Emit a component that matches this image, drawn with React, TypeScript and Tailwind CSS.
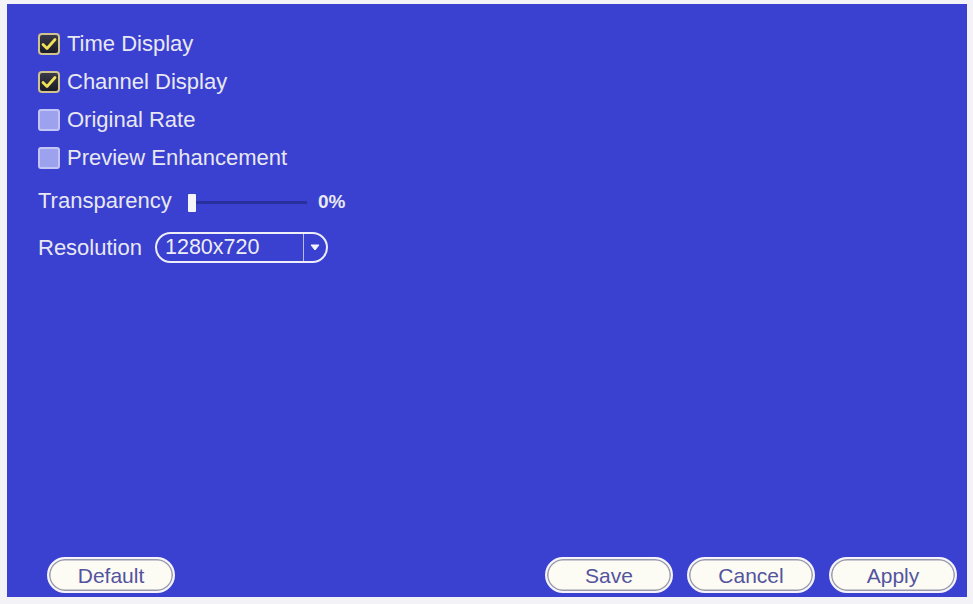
import React from "react";

const font = { fontFamily: '"Liberation Sans", Arial, sans-serif' };

const CheckBox: React.FunctionComponent<{ checked: boolean }> = ({ checked }) =>
  checked ? (
    <div className="w-[22px] h-[22px] rounded-[4px] border-2 border-[#cfc48e] bg-gradient-to-b from-[#3a3a48] to-[#1c1c28] flex items-center justify-center">
      <svg width="16" height="14" viewBox="0 0 16 14">
        <path
          d="M2 7.5 L6 11.5 L14 2.5"
          fill="none"
          stroke="#eee25a"
          strokeWidth="2.8"
          strokeLinecap="round"
          strokeLinejoin="round"
        />
      </svg>
    </div>
  ) : (
    <div className="w-[22px] h-[22px] rounded-[3px] border-2 border-[#c3c6f4] bg-[#9da2ee]" />
  );

const Option: React.FunctionComponent<{ label: string; checked: boolean }> = ({
  label,
  checked,
}) => (
  <div className="h-[38px] flex items-center gap-[7px]">
    <CheckBox checked={checked} />
    <span className="text-[22px] text-[#e8e8f2] leading-none">{label}</span>
  </div>
);

const PillButton: React.FunctionComponent<{ label: string }> = ({ label }) => (
  <button className="w-[128px] h-[36px] rounded-full border-2 border-[#f4f4fa] bg-[#fcfbf4] shadow-[inset_0_0_0_1.5px_#9a9aac] text-[21px] text-[#54549e] leading-none flex items-center justify-center">
    {label}
  </button>
);

export default function App() {
  return (
    <div className="w-[973px] h-[604px] bg-[#f3f3f7] pt-[4px] pl-[7px]" style={font}>
      <div className="w-[960px] h-[593px] bg-[#3a40cf] flex flex-col pl-[31px] pr-[10px] pt-[21px] pb-[4px]">
        <Option label="Time Display" checked />
        <Option label="Channel Display" checked />
        <Option label="Original Rate" checked={false} />
        <Option label="Preview Enhancement" checked={false} />

        <div className="h-[38px] mt-[5px] flex items-center">
          <span className="w-[150px] text-[22px] text-[#e8e8f2] leading-none">Transparency</span>
          <div className="w-[8px] h-[18px] bg-[#f4f4f8] rounded-[1px] mt-[3px]" />
          <div className="w-[111px] h-[3px] bg-[#2a2f9e] mt-[2px]" />
          <span className="ml-[11px] text-[19px] font-bold text-[#e8e8f2] leading-none">0%</span>
        </div>

        <div className="h-[31px] mt-[12px] flex items-center">
          <span className="w-[117px] text-[22px] text-[#e8e8f2] leading-none">Resolution</span>
          <div className="w-[173px] h-[31px] rounded-full border-2 border-[#eeeef8] flex items-center">
            <span className="flex-1 pl-[8px] text-[21.5px] text-[#eeeef6] leading-none">1280x720</span>
            <div className="w-[1px] h-full bg-[#b8bbe8]" />
            <div className="w-[22px] flex items-center justify-center">
              <svg width="10" height="7" viewBox="0 0 10 7">
                <path d="M1 1 L9 1 L5 6 Z" fill="#f4f4fa" stroke="#f4f4fa" strokeLinejoin="round" />
              </svg>
            </div>
          </div>
        </div>

        <div className="mt-auto flex items-center pl-[9px]">
          <PillButton label="Default" />
          <div className="ml-auto flex gap-[14px]">
            <PillButton label="Save" />
            <PillButton label="Cancel" />
            <PillButton label="Apply" />
          </div>
        </div>
      </div>
    </div>
  );
}
